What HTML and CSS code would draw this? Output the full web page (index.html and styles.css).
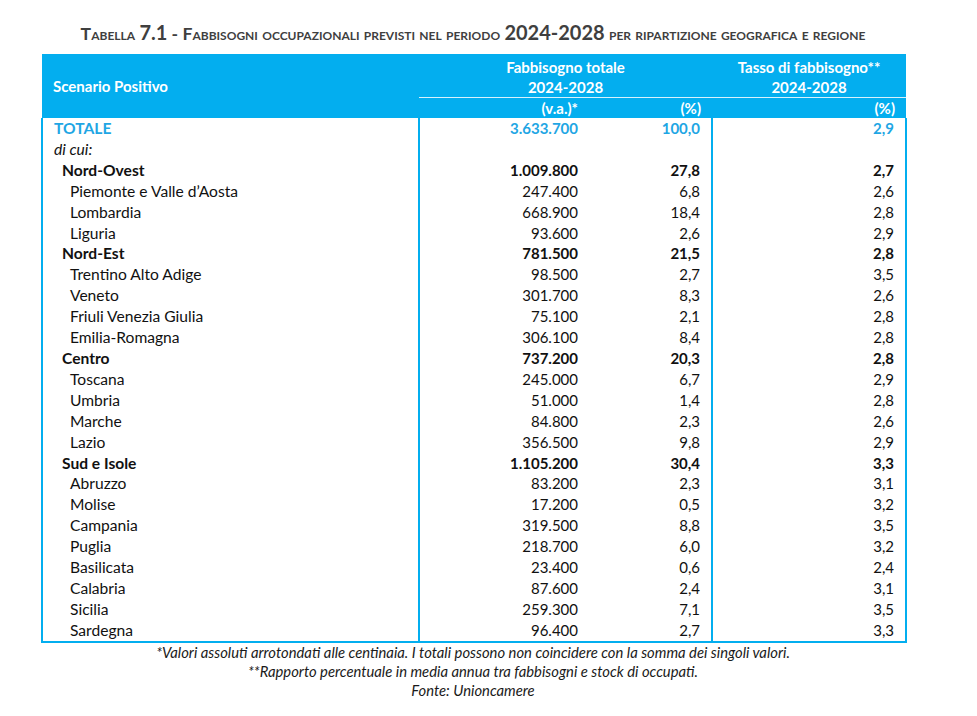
FILE: index.html
```html
<!DOCTYPE html>
<html lang="it">
<head>
    <meta charset="UTF-8">
    <meta name="viewport" content="width=device-width, initial-scale=1.0">
    <title>Tabella 7.1</title>
    <link rel="stylesheet" href="styles.css">
</head>
<body>
    <div class="page">
        <h1 class="title">Tabella <span class="num">7.1</span> - Fabbisogni occupazionali previsti nel periodo <span class="num">2024-2028</span> per ripartizione geografica e regione</h1>

        <table class="data-table">
            <colgroup>
                <col class="col-name">
                <col class="col-va">
                <col class="col-pct">
                <col class="col-rate">
            </colgroup>
            <thead>
                <tr class="head-top">
                    <th rowspan="2" class="head-name">Scenario Positivo</th>
                    <th colspan="2" class="head-group">Fabbisogno totale<br>2024-2028</th>
                    <th class="head-group">Tasso di fabbisogno**<br>2024-2028</th>
                </tr>
                <tr class="head-sub">
                    <th class="va">(v.a.)*</th>
                    <th class="pct">(%)</th>
                    <th class="rate">(%)</th>
                </tr>
            </thead>
            <tbody>
                <tr class="total">
                    <td class="name">TOTALE</td>
                    <td class="va">3.633.700</td>
                    <td class="pct">100,0</td>
                    <td class="rate">2,9</td>
                </tr>
                <tr class="note-row">
                    <td class="name">di cui:</td>
                    <td></td><td></td><td></td>
                </tr>
                <tr class="area">
                    <td class="name">Nord-Ovest</td>
                    <td class="va">1.009.800</td>
                    <td class="pct">27,8</td>
                    <td class="rate">2,7</td>
                </tr>
                <tr class="region"><td class="name">Piemonte e Valle d’Aosta</td><td class="va">247.400</td><td class="pct">6,8</td><td class="rate">2,6</td></tr>
                <tr class="region"><td class="name">Lombardia</td><td class="va">668.900</td><td class="pct">18,4</td><td class="rate">2,8</td></tr>
                <tr class="region"><td class="name">Liguria</td><td class="va">93.600</td><td class="pct">2,6</td><td class="rate">2,9</td></tr>
                <tr class="area">
                    <td class="name">Nord-Est</td>
                    <td class="va">781.500</td>
                    <td class="pct">21,5</td>
                    <td class="rate">2,8</td>
                </tr>
                <tr class="region"><td class="name">Trentino Alto Adige</td><td class="va">98.500</td><td class="pct">2,7</td><td class="rate">3,5</td></tr>
                <tr class="region"><td class="name">Veneto</td><td class="va">301.700</td><td class="pct">8,3</td><td class="rate">2,6</td></tr>
                <tr class="region"><td class="name">Friuli Venezia Giulia</td><td class="va">75.100</td><td class="pct">2,1</td><td class="rate">2,8</td></tr>
                <tr class="region"><td class="name">Emilia-Romagna</td><td class="va">306.100</td><td class="pct">8,4</td><td class="rate">2,8</td></tr>
                <tr class="area">
                    <td class="name">Centro</td>
                    <td class="va">737.200</td>
                    <td class="pct">20,3</td>
                    <td class="rate">2,8</td>
                </tr>
                <tr class="region"><td class="name">Toscana</td><td class="va">245.000</td><td class="pct">6,7</td><td class="rate">2,9</td></tr>
                <tr class="region"><td class="name">Umbria</td><td class="va">51.000</td><td class="pct">1,4</td><td class="rate">2,8</td></tr>
                <tr class="region"><td class="name">Marche</td><td class="va">84.800</td><td class="pct">2,3</td><td class="rate">2,6</td></tr>
                <tr class="region"><td class="name">Lazio</td><td class="va">356.500</td><td class="pct">9,8</td><td class="rate">2,9</td></tr>
                <tr class="area">
                    <td class="name">Sud e Isole</td>
                    <td class="va">1.105.200</td>
                    <td class="pct">30,4</td>
                    <td class="rate">3,3</td>
                </tr>
                <tr class="region"><td class="name">Abruzzo</td><td class="va">83.200</td><td class="pct">2,3</td><td class="rate">3,1</td></tr>
                <tr class="region"><td class="name">Molise</td><td class="va">17.200</td><td class="pct">0,5</td><td class="rate">3,2</td></tr>
                <tr class="region"><td class="name">Campania</td><td class="va">319.500</td><td class="pct">8,8</td><td class="rate">3,5</td></tr>
                <tr class="region"><td class="name">Puglia</td><td class="va">218.700</td><td class="pct">6,0</td><td class="rate">3,2</td></tr>
                <tr class="region"><td class="name">Basilicata</td><td class="va">23.400</td><td class="pct">0,6</td><td class="rate">2,4</td></tr>
                <tr class="region"><td class="name">Calabria</td><td class="va">87.600</td><td class="pct">2,4</td><td class="rate">3,1</td></tr>
                <tr class="region"><td class="name">Sicilia</td><td class="va">259.300</td><td class="pct">7,1</td><td class="rate">3,5</td></tr>
                <tr class="region"><td class="name">Sardegna</td><td class="va">96.400</td><td class="pct">2,7</td><td class="rate">3,3</td></tr>
            </tbody>
        </table>

        <div class="notes">
            <p>*Valori assoluti arrotondati alle centinaia. I totali possono non coincidere con la somma dei singoli valori.</p>
            <p>**Rapporto percentuale in media annua tra fabbisogni e stock di occupati.</p>
            <p>Fonte: Unioncamere</p>
        </div>
    </div>
</body>
</html>
```

FILE: styles.css
```css
body {
    margin: 0;
    padding: 0;
    background: #fff;
    font-family: Lato, "Open Sans", sans-serif;
    color: #111;
}

.page {
    width: 864px;
    margin-left: 41px;
    padding-top: 20px;
}

.title {
    margin: 0 0 8px -10px;
    width: 884px;
    text-align: center;
    font-size: 17.6px;
    font-weight: 700;
    font-variant: small-caps;
    color: #3f3f3f;
    line-height: 24px;
    letter-spacing: 0;
    white-space: nowrap;
}

.title .num {
    font-size: 20px;
    font-variant: normal;
}

.data-table {
    width: 864px;
    border-collapse: collapse;
    table-layout: fixed;
    font-size: 15px;
}

.col-name { width: 377px; }
.col-va { width: 170px; }
.col-pct { width: 123px; }
.col-rate { width: 194px; }

/* header */
.data-table thead th {
    background: #03aeef;
    color: #fff;
    font-weight: 700;
    padding: 0;
}

.head-top th {
    height: 43px;
    line-height: 20px;
    vertical-align: bottom;
    padding-bottom: 2px;
    border-bottom: 1px solid #d8f1fc;
    text-align: center;
}

.head-top .head-name {
    text-align: left;
    padding-left: 11px;
    vertical-align: middle;
    border-bottom: none;
    padding-bottom: 0;
}

.head-sub th {
    height: 20px;
    line-height: 20px;
    vertical-align: middle;
}

.head-sub .va,
.head-sub .pct,
.head-sub .rate {
    text-align: right;
    padding-right: 11px;
}

/* body */
.data-table tbody td {
    padding: 0;
    height: 20.9px;
    line-height: 20.9px;
    white-space: nowrap;
}

.data-table tbody .name {
    font-size: 15.6px;
}

.data-table tbody tr td:first-child,
.data-table tbody tr td:last-child {
    border-left: 2px solid #03aeef;
    border-right: 2px solid #03aeef;
}

.data-table tbody tr:last-child td {
    border-bottom: 2px solid #03aeef;
}

.data-table tbody .va,
.data-table tbody .pct,
.data-table tbody .rate {
    text-align: right;
    padding-right: 11px;
}

.total td {
    color: #1fa6e4;
    font-weight: 700;
}

.total .name,
.note-row .name {
    padding-left: 11px;
}

.note-row .name {
    font-style: italic;
}

.area td {
    font-weight: 700;
}

.area .name {
    padding-left: 19px;
}

.region .name {
    padding-left: 27px;
}

/* notes */
.notes {
    text-align: center;
    font-size: 14.8px;
    font-style: italic;
    color: #1a1a1a;
    padding-top: 0;
}

.notes p {
    margin: 0;
    line-height: 19px;
}
```
